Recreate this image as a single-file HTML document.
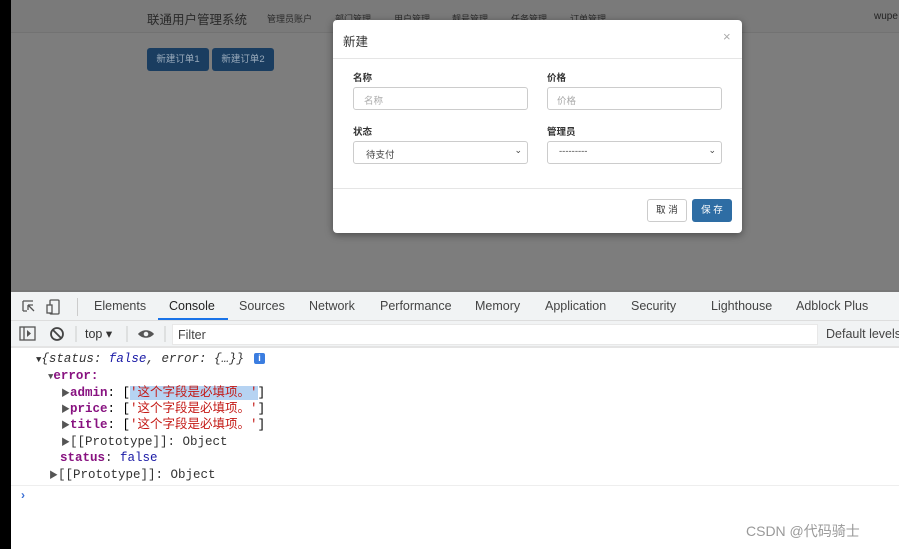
<!DOCTYPE html>
<html><head><meta charset="utf-8"><style>
*{box-sizing:border-box;margin:0;padding:0}
body{width:899px;height:549px;overflow:hidden;background:#fff;font-family:"Liberation Sans","Noto Sans CJK SC",sans-serif;position:relative}
.abs{position:absolute;white-space:nowrap}
.mono{font-family:"Liberation Mono","Noto Sans CJK SC",monospace;font-size:12.5px;line-height:15px;height:15px}
</style></head><body>
<div class="abs" style="left:0;top:0;width:11px;height:549px;background:#000"></div>
<div class="abs" style="left:11px;top:0;width:888px;height:291px;background:#7d7d7d"></div>
<div class="abs" style="left:11px;top:0;width:888px;height:33px;background:#7a7a7a;border-bottom:1px solid #727272"></div>
<div class="abs" style="left:147px;top:9px;font-size:12.5px;color:#2a2a2a">联通用户管理系统</div>
<div class="abs" style="left:267px;top:12px;font-size:9px;color:#2a2a2a">管理员账户</div>
<div class="abs" style="left:335px;top:12px;font-size:9px;color:#2a2a2a">部门管理</div>
<div class="abs" style="left:394px;top:12px;font-size:9px;color:#2a2a2a">用户管理</div>
<div class="abs" style="left:452px;top:12px;font-size:9px;color:#2a2a2a">靓号管理</div>
<div class="abs" style="left:511px;top:12px;font-size:9px;color:#2a2a2a">任务管理</div>
<div class="abs" style="left:570px;top:12px;font-size:9px;color:#2a2a2a">订单管理</div>
<div class="abs" style="left:874px;top:11px;font-size:10px;color:#222">wupe</div>
<div class="abs" style="left:147px;top:48px;width:62px;height:23px;background:#1a3d60;border-radius:3px;color:#9ab;font-size:9.5px;text-align:center;line-height:23px">新建订单1</div>
<div class="abs" style="left:212px;top:48px;width:62px;height:23px;background:#1a3d60;border-radius:3px;color:#9ab;font-size:9.5px;text-align:center;line-height:23px">新建订单2</div>
<div class="abs" style="left:333px;top:20px;width:409px;height:213px;background:#fff;border-radius:4px;box-shadow:0 2px 8px rgba(0,0,0,.4)">
 <div class="abs" style="left:10px;top:11px;font-size:12.5px;color:#333">新建</div>
 <div class="abs" style="left:390px;top:9px;font-size:13px;color:#aaa">×</div>
 <div class="abs" style="left:0;top:38px;width:409px;border-top:1px solid #e5e5e5"></div>
 <div class="abs" style="left:20px;top:50px;font-size:9.5px;font-weight:bold;color:#333">名称</div>
 <div class="abs" style="left:214px;top:50px;font-size:9.5px;font-weight:bold;color:#333">价格</div>
 <div class="abs" style="left:20px;top:67px;width:175px;height:23px;border:1px solid #ccc;border-radius:3px;font-size:9.5px;color:#aaa;padding:5px 0 0 10px">名称</div>
 <div class="abs" style="left:214px;top:67px;width:175px;height:23px;border:1px solid #ccc;border-radius:3px;font-size:9.5px;color:#aaa;padding:5px 0 0 9px">价格</div>
 <div class="abs" style="left:20px;top:104px;font-size:9.5px;font-weight:bold;color:#333">状态</div>
 <div class="abs" style="left:214px;top:104px;font-size:9.5px;font-weight:bold;color:#333">管理员</div>
 <div class="abs" style="left:20px;top:121px;width:175px;height:23px;border:1px solid #ccc;border-radius:3px;font-size:9.5px;color:#444;padding:5px 0 0 12px">待支付<span class="abs" style="right:5px;top:3px;font-size:9px">⌄</span></div>
 <div class="abs" style="left:214px;top:121px;width:175px;height:23px;border:1px solid #ccc;border-radius:3px;font-size:9.5px;color:#444;padding:4px 0 0 11px">---------<span class="abs" style="right:5px;top:3px;font-size:9px">⌄</span></div>
 <div class="abs" style="left:0;top:168px;width:409px;border-top:1px solid #e5e5e5"></div>
 <div class="abs" style="left:314px;top:179px;width:40px;height:23px;border:1px solid #ccc;border-radius:3px;font-size:9.5px;color:#333;text-align:center;line-height:21px">取 消</div>
 <div class="abs" style="left:359px;top:179px;width:40px;height:23px;background:#2e6da4;border-radius:3px;font-size:9.5px;color:#fff;text-align:center;line-height:23px">保 存</div>
</div>
<div class="abs" style="left:11px;top:290px;width:888px;height:2px;background:#777"></div>
<div class="abs" style="left:11px;top:292px;width:888px;height:29px;background:#f1f3f4;border-bottom:1px solid #ddd"></div>
<svg class="abs" style="left:20px;top:298px" width="50" height="18"><path d="M3 3h10M3 3v10M3 13h4" stroke="#555" fill="none" stroke-width="1.3"/><path d="M8 7l6 6M8 7v5M8 7h5" stroke="#555" fill="none" stroke-width="1.3"/><rect x="30" y="2" width="9" height="14" rx="1" stroke="#555" fill="none" stroke-width="1.3"/><rect x="27" y="7" width="5" height="8" stroke="#555" fill="#f1f3f4" stroke-width="1.3"/></svg>
<div class="abs" style="left:77px;top:298px;width:1px;height:18px;background:#ccc"></div>
<div class="abs" style="font-size:12.5px;color:#444;top:299px;left:94px">Elements</div>
<div class="abs" style="font-size:12.5px;color:#222;top:299px;left:169px">Console</div>
<div class="abs" style="left:158px;top:318px;width:70px;height:2px;background:#1a73e8"></div>
<div class="abs" style="font-size:12.5px;color:#444;top:299px;left:239px">Sources</div>
<div class="abs" style="font-size:12.5px;color:#444;top:299px;left:309px">Network</div>
<div class="abs" style="font-size:12.5px;color:#444;top:299px;left:380px">Performance</div>
<div class="abs" style="font-size:12.5px;color:#444;top:299px;left:475px">Memory</div>
<div class="abs" style="font-size:12.5px;color:#444;top:299px;left:545px">Application</div>
<div class="abs" style="font-size:12.5px;color:#444;top:299px;left:631px">Security</div>
<div class="abs" style="font-size:12.5px;color:#444;top:299px;left:711px">Lighthouse</div>
<div class="abs" style="font-size:12.5px;color:#444;top:299px;left:796px">Adblock Plus</div>
<div class="abs" style="left:11px;top:321px;width:888px;height:27px;background:#f1f3f4;border-bottom:2px solid #e4e4e4"></div>
<svg class="abs" style="left:18px;top:325px" width="150" height="18"><rect x="2" y="2" width="15" height="13" stroke="#555" fill="none" stroke-width="1.3"/><path d="M6 2v13" stroke="#555" stroke-width="1.3"/><path d="M9 5l4 3.5-4 3.5z" fill="#555"/><circle cx="39" cy="9" r="6" stroke="#444" fill="none" stroke-width="1.8"/><path d="M35 5l8 8" stroke="#444" stroke-width="1.8"/><path d="M58 1v16" stroke="#ccc"/><path d="M109 1v16M147 1v16" stroke="#ccc"/><path d="M120 9c4-5 12-5 16 0c-4 5-12 5-16 0z" fill="#555"/><circle cx="128" cy="9" r="2.3" fill="#f1f3f4"/></svg>
<div class="abs" style="left:85px;top:326px;font-size:12.5px;color:#333">top ▾</div>
<div class="abs" style="left:172px;top:324px;width:646px;height:21px;background:#fff;border:1px solid #e8e8e8;font-size:12.5px;color:#444;padding:3px 0 0 5px">Filter</div>
<div class="abs" style="left:826px;top:327px;font-size:12.5px;color:#444">Default levels</div>
<div class="abs mono" style="left:36px;top:352px;color:#333;font-style:italic"><span style="font-style:normal;font-size:9px">▼</span>{status: <span style="color:#1a1aa6">false</span>, error: {…}}</div>
<div class="abs" style="left:254px;top:353px;width:11px;height:11px;background:#3b7de0;border-radius:2px;color:#fff;font-size:9px;font-weight:bold;text-align:center;line-height:11px">i</div>
<div class="abs mono" style="left:48px;top:369px;color:#881280;font-weight:bold"><span style="font-size:9px;color:#555">▼</span>error:</div>
<div class="abs mono" style="left:61px;top:386px"><span style="font-size:9px;color:#555">▶</span><b style="color:#881280">admin</b>: [<span style="background:#b6d3f2;color:#c41a16">'这个字段是必填项。'</span>]</div>
<div class="abs mono" style="left:61px;top:402px"><span style="font-size:9px;color:#555">▶</span><b style="color:#881280">price</b>: [<span style="color:#c41a16">'这个字段是必填项。'</span>]</div>
<div class="abs mono" style="left:61px;top:418px"><span style="font-size:9px;color:#555">▶</span><b style="color:#881280">title</b>: [<span style="color:#c41a16">'这个字段是必填项。'</span>]</div>
<div class="abs mono" style="left:61px;top:435px;color:#333"><span style="font-size:9px;color:#555">▶</span>[[Prototype]]: Object</div>
<div class="abs mono" style="left:60px;top:451px;color:#333"><b style="color:#881280">status</b>: <span style="color:#1a1aa6">false</span></div>
<div class="abs mono" style="left:49px;top:468px;color:#333"><span style="font-size:9px;color:#555">▶</span>[[Prototype]]: Object</div>
<div class="abs" style="left:11px;top:485px;width:888px;border-top:1px solid #eee"></div>
<div class="abs" style="left:21px;top:488px;font-size:12px;color:#3b6fd4;font-weight:bold">›</div>
<div class="abs" style="left:746px;top:521px;font-size:14px;color:#999">CSDN @代码骑士</div>
</body></html>
